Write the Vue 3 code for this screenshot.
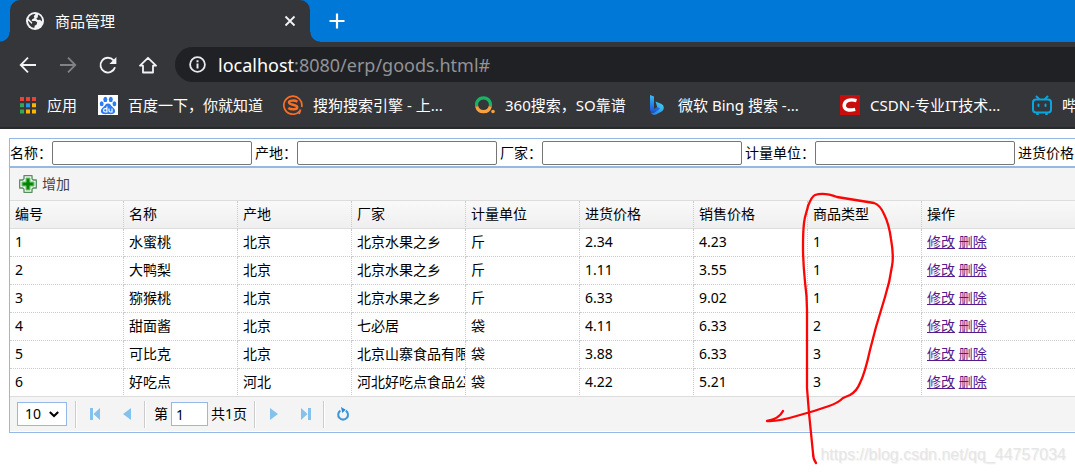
<script setup>
import { ref } from 'vue'

const searchFields = ref([
  { id: 'name', label: '名称：', value: '' },
  { id: 'origin', label: '产地：', value: '' },
  { id: 'maker', label: '厂家：', value: '' },
  { id: 'unit', label: '计量单位：', value: '' },
  { id: 'cost', label: '进货价格：', value: '' },
])

const columns = ['编号', '名称', '产地', '厂家', '计量单位', '进货价格', '销售价格', '商品类型', '操作']

const goods = [
  ['1', '水蜜桃', '北京', '北京水果之乡', '斤', '2.34', '4.23', '1'],
  ['2', '大鸭梨', '北京', '北京水果之乡', '斤', '1.11', '3.55', '1'],
  ['3', '猕猴桃', '北京', '北京水果之乡', '斤', '6.33', '9.02', '1'],
  ['4', '甜面酱', '北京', '七必居', '袋', '4.11', '6.33', '2'],
  ['5', '可比克', '北京', '北京山寨食品有限', '袋', '3.88', '6.33', '3'],
  ['6', '好吃点', '河北', '河北好吃点食品公', '袋', '4.22', '5.21', '3'],
]

const page = ref('1')
const pageSize = ref('10')
</script>

<template>
  <div class="page">
    <header class="browser">
      <div class="tabstrip">
        <div class="tab">
          <svg class="globe" width="18" height="18" viewBox="0 0 18 18">
            <circle cx="9" cy="9" r="9" fill="#f1f3f4" />
            <path d="M9.5 2 7.8 4.2 8.4 6 6.2 7.3 5.6 9H9.4l1.8 1.5-.5 2-2 1.2-.4 2.3A7.2 7.2 0 0 1 2 8.600L5.800 12l.5-1.600L2.400 6.600A7.200 7.200 0 0 1 9.500 2z" fill="#35363a" />
            <path d="M12 2.600a7.200 7.200 0 0 1 4 7l-2-1.800-2.400.2-1.400-1.800 1.600-.8z" fill="#35363a" />
          </svg>
          <span class="tab-title">商品管理</span>
          <button class="plain" aria-label="关闭标签页">
            <svg width="12" height="12" viewBox="0 0 12 12"><path d="M1.500 1.500l9 9M10.500 1.500l-9 9" stroke="#f1f3f4" stroke-width="1.800" /></svg>
          </button>
        </div>
        <button class="plain new-tab" aria-label="新标签页">
          <svg width="16" height="16" viewBox="0 0 16 16"><path d="M8 .5v15M.5 8h15" stroke="#fff" stroke-width="2.200" /></svg>
        </button>
      </div>

      <div class="navbar">
        <nav class="nav-buttons">
          <button class="plain" aria-label="后退">
            <svg width="20" height="20" viewBox="0 0 20 20" fill="none" stroke="#f1f3f4" stroke-width="1.800"><path d="M18 10H3M10 2.700 2.700 10l7.300 7.300" /></svg>
          </button>
          <button class="plain" aria-label="前进">
            <svg width="20" height="20" viewBox="0 0 20 20" fill="none" stroke="#818286" stroke-width="1.800"><path d="M2 10h15M10 2.700l7.300 7.300-7.300 7.300" /></svg>
          </button>
          <button class="plain" aria-label="重新加载">
            <svg width="20" height="20" viewBox="0 0 20 20"><path d="M15.600 5.400A7.400 7.400 0 1 0 17 12.300" fill="none" stroke="#f1f3f4" stroke-width="1.900" /><path d="M18.400 1.900v7H11.400z" fill="#f1f3f4" /></svg>
          </button>
          <button class="plain" aria-label="主页">
            <svg width="20" height="20" viewBox="0 0 20 20" fill="none" stroke="#f1f3f4" stroke-width="1.800"><path d="M2 10.700H5V17.500h10v-6.800h3L10 2.800z" stroke-linejoin="round" /></svg>
          </button>
        </nav>
        <div class="omnibox">
          <svg width="17" height="17" viewBox="0 0 17 17"><circle cx="8.500" cy="8.500" r="7.400" fill="none" stroke="#e8eaed" stroke-width="1.800" /><path d="M8.500 7.500v5M8.500 4.200v2" stroke="#e8eaed" stroke-width="2" /></svg>
          <span class="url"><b>localhost</b>:8080/erp/goods.html#</span>
        </div>
      </div>

      <div class="bookmarks">
        <a class="bookmark apps" href="#">
          <svg width="17" height="17" viewBox="0 0 17 17">
            <path d="M0 0h4v4H0zM6 0h4v4H6zM12 0h4v4h-4z" fill="#ea4335" />
            <path d="M0 6.300h4v4H0zM0 12.600h4v4H0z" fill="#34a853" />
            <path d="M6 6.300h4v4H6z" fill="#2196f3" />
            <path d="M12 6.300h4v4h-4zM6 12.600h4v4H6zM12 12.600h4v4h-4z" fill="#fbb506" />
          </svg>
          应用
        </a>
        <a class="bookmark baidu" href="#">
          <svg width="20" height="20" viewBox="0 0 20 20">
            <path d="M0 0h20v20H0z" fill="#fff" />
            <g fill="#2b7df5">
              <ellipse cx="7.300" cy="4.400" rx="2" ry="2.700" /><ellipse cx="12.800" cy="4.400" rx="2" ry="2.700" />
              <ellipse cx="3.700" cy="8.800" rx="1.900" ry="2.500" /><ellipse cx="16.400" cy="8.800" rx="1.900" ry="2.500" />
              <path d="M10 8.400c2.500 0 3 2.100 4.600 3.700 2 2 2.900 3 2.400 4.900-.7 2.600-4 2.100-7 2.100s-6.300.5-7-2.100c-.5-1.900.4-2.900 2.400-4.900C7 10.500 7.500 8.400 10 8.400z" />
            </g>
            <path d="M8.900 11.500v5.500H7.200a1.500 1.500 0 0 1 0-3.300h1.700M11 13.400v2.200q0 1.400 1.300 1.400H14v-3.600" fill="none" stroke="#fff" stroke-width="1.200" />
          </svg>
          百度一下，你就知道
        </a>
        <a class="bookmark sogou" href="#">
          <svg width="20" height="20" viewBox="0 0 20 20" fill="none" stroke="#fb6f22">
            <path d="M16.600 16.200A9 9 0 1 1 18.700 12M15 17.800l-1.500.7" stroke-width="1.700" />
            <path d="M14.400 6.800C12.300 5.300 6 4.900 6 7.600c0 2.800 8.200 1.600 8.200 4.600 0 2.700-6.200 2.600-8.900.7" stroke-width="2.500" />
            <path d="M17.500 14.500 16 19" stroke-width="2" />
          </svg>
          搜狗搜索引擎 - 上...
        </a>
        <a class="bookmark so" href="#">
          <svg width="20" height="20" viewBox="0 0 20 20" fill="none" stroke-width="3.200">
            <path d="M1.700 11.500A7 7 0 1 1 15.300 11.500" stroke="#19b365" />
            <path d="M1.700 11.300A7 7 0 0 0 15.300 11.300" stroke="#f9a03f" />
            <circle cx="18" cy="16.500" r="1.800" fill="#f9a03f" stroke="none" />
          </svg>
          360搜索，SO靠谱
        </a>
        <a class="bookmark bing" href="#">
          <svg width="20" height="20" viewBox="0 0 20 20">
            <defs>
              <linearGradient id="bing-stem" x1="0" y1="0" x2="0" y2="1"><stop offset="0" stop-color="#38bdf8" /><stop offset="1" stop-color="#1b4fd8" /></linearGradient>
              <linearGradient id="bing-bowl" x1="0" y1="1" x2="1" y2="0"><stop offset="0" stop-color="#1f74ea" /><stop offset="1" stop-color="#43d8ee" /></linearGradient>
            </defs>
            <path d="M2 0l4 1.500V14l4-2.500 2.500 1.800L7 17.500Q2 18.500 2 14z" fill="url(#bing-stem)" />
            <path d="M7.500 6.500l5.500 2.300q3 1.300 2.800 4.300-.2 2.200-2.200 3.400L8 19.600q-4 1.400-5.600-2.600 2 1.600 4.600.3L12 13.500l-2.900-1.700z" fill="url(#bing-bowl)" />
          </svg>
          微软 Bing 搜索 -...
        </a>
        <a class="bookmark csdn" href="#">
          <svg width="20" height="20" viewBox="0 0 20 20"><path d="M0 0h20v20H0z" fill="#c90d0d" /><path d="M16.500 5.700C10 3.800 4.800 5.300 4.200 10.200c-.4 4.600 4.700 5.600 11 4.100" fill="none" stroke="#fff" stroke-width="3.400" /></svg>
          CSDN-专业IT技术...
        </a>
        <a class="bookmark bili" href="#">
          <svg width="20" height="20" viewBox="0 0 20 20" fill="none" stroke="#08a6dd" stroke-width="2" stroke-linecap="round"><rect x="1" y="4.500" width="18" height="13" rx="3" /><path d="M4.500 1.500 7 4M15.500 1.500 13 4M6.500 9.500v1.500M13.500 9.500v1.500M5 19h1M14 19h1" /></svg>
          哔
        </a>
      </div>
    </header>

    <main class="content">
      <form class="search" @submit.prevent>
        <template v-for="f in searchFields" :key="f.id">
          <label :for="f.id">{{ f.label }}</label>
          <input :id="f.id" v-model="f.value" type="text" />
        </template>
      </form>

      <section class="grid">
        <div class="toolbar">
          <button class="plain add">
            <svg width="18" height="18" viewBox="0 0 18 18">
              <path d="M5 .7h8v3L14.300 5h3v8h-3L13 14.300v3H5v-3L3.700 13h-3V5h3L5 3.700z" fill="#f3faf3" stroke="#578d61" stroke-width="1.300" stroke-linejoin="round" />
              <path d="M7 3h4v4h4v4h-4v4H7v-4H3V7h4z" fill="#169b16" stroke="#6ebf6e" stroke-width="1" />
              <path d="M9 4.500v9M4.500 9h9" stroke="#078407" stroke-width="2" />
            </svg>
            增加
          </button>
        </div>

        <table>
          <thead>
            <tr><th v-for="c in columns" :key="c" scope="col">{{ c }}</th></tr>
          </thead>
          <tbody>
            <tr v-for="row in goods" :key="row[0]">
              <td v-for="(cell, i) in row" :key="i">{{ cell }}</td>
              <td><a href="#">修改</a> <a href="#">删除</a></td>
            </tr>
          </tbody>
        </table>

        <footer class="pager">
          <div class="size">
            <select v-model="pageSize" aria-label="每页条数">
              <option>10</option>
              <option>20</option>
              <option>50</option>
            </select>
            <svg class="chevron" width="10" height="7" viewBox="0 0 10 7"><path d="M.8 1 5 5 9.200 1" fill="none" stroke="#000" stroke-width="2" /></svg>
          </div>
          <span class="sep"></span>
          <button class="plain" aria-label="首页"><svg width="10" height="12" viewBox="0 0 10 12" fill="#84c1ec"><path d="M0 0h3v12H0zM10 0v12L3.500 6z" /></svg></button>
          <button class="plain" aria-label="上一页"><svg width="8" height="12" viewBox="0 0 8 12" fill="#84c1ec"><path d="M8 0v12L0 6z" /></svg></button>
          <span class="sep"></span>
          <label class="page-no">第<input v-model="page" type="text" />共1页</label>
          <span class="sep"></span>
          <button class="plain" aria-label="下一页"><svg width="8" height="12" viewBox="0 0 8 12" fill="#84c1ec"><path d="M0 0v12l8-6z" /></svg></button>
          <button class="plain" aria-label="末页"><svg width="10" height="12" viewBox="0 0 10 12" fill="#84c1ec"><path d="M7 0h3v12H7zM0 0v12l6.500-6z" /></svg></button>
          <span class="sep"></span>
          <button class="plain" aria-label="刷新">
            <svg width="14" height="14" viewBox="0 0 14 14"><path d="M9.800 3.600A4.900 4.900 0 1 1 4.400 3.600" fill="none" stroke="#3f98dc" stroke-width="2.100" /><path d="M5 0l4.700 2.800L6.300 6z" fill="#2e86cf" /></svg>
          </button>
        </footer>
      </section>
    </main>

    <svg class="scribble" width="1075" height="473" viewBox="0 0 1075 473" fill="none" stroke="#fb0505" stroke-width="2.300" stroke-linecap="round" stroke-linejoin="round">
      <path d="M816 463Q813 459 813 453L809 413 807 388V310Q807 296 805 282 803 262 803 247 803 232 804 223C805 214 807 212 808 206Q812 196 815 195 824 192 837 197L874 203Q880 205 884 214 889 224 891 239 894 256 892 266 890 281 885 297L876 327 870 350Q865 373 860 383 857 391 850 395L843 398Q838 403 829 406 815 411 800 415 777 422 767 421 779 419 783 411" />
    </svg>
    <div class="watermark">https://blog.csdn.net/qq_44757034</div>
  </div>
</template>

<style>
body {
  background: #fff;
}
</style>

<style scoped>
.page {
  position: relative;
  overflow: hidden;
  min-height: 100vh;
  font: 14px/20px "Noto Sans", "Noto Sans CJK SC", sans-serif;
  color: #000;
}
.page * {
  box-sizing: border-box;
}
svg {
  display: block;
  flex: none;
}
input,
select,
button {
  font: inherit;
  color: inherit;
}
.plain {
  display: flex;
  align-items: center;
  justify-content: center;
  padding: 0;
  border: 0;
  background: none;
}

.browser {
  background: #35363a;
  border-bottom: 2px solid #28292c;
  color: #fff;
  font-size: 15px;
}
.tabstrip {
  display: flex;
  height: 42px;
  padding-left: 10px;
  background: #0078d7;
}
.tab {
  position: relative;
  display: flex;
  align-items: center;
  width: 300px;
  padding: 0 14px 0 16px;
  border-radius: 10px 10px 0 0;
  background: #35363a;
}
.tab::before,
.tab::after {
  content: "";
  position: absolute;
  bottom: 0;
  width: 10px;
  height: 10px;
}
.tab::before {
  right: 100%;
  background: radial-gradient(circle at 0 0, #0078d7 9px, #35363a 10px);
}
.tab::after {
  left: 100%;
  background: radial-gradient(circle at 100% 0, #0078d7 9px, #35363a 10px);
}
.tab-title {
  flex: 1;
  margin-left: 11px;
}
.new-tab {
  margin-left: 19px;
}
.navbar {
  display: flex;
  align-items: center;
  gap: 17px;
  height: 45px;
  padding-left: 18px;
}
.nav-buttons {
  display: flex;
  gap: 20px;
}
.omnibox {
  flex: 1;
  display: flex;
  align-items: center;
  gap: 12px;
  height: 35px;
  margin-right: -24px;
  padding-left: 14px;
  border-radius: 18px;
  background: #202124;
}
.url {
  font-size: 18px;
  line-height: 24px;
  color: #919396;
}
.url b {
  font-weight: 400;
  color: #fff;
}
.bookmarks {
  display: flex;
  height: 40px;
  padding: 0 0 4px 20px;
}
.bookmark {
  flex: none;
  display: flex;
  align-items: center;
  gap: 10px;
  width: 192px;
  color: #fff;
  white-space: nowrap;
  text-decoration: none;
}
.apps {
  width: 78px;
}
.baidu {
  width: 185px;
}
.so {
  width: 173px;
}

.content {
  padding: 9px 0 0 9px;
}
.search {
  display: flex;
  align-items: center;
  gap: 3px;
  height: 29px;
  border: 1px solid #95b8e7;
  border-right: 0;
  white-space: nowrap;
  overflow: hidden;
}
.search label {
  flex: none;
  margin-right: -3px;
}
.search input {
  flex: none;
  width: 200px;
  height: 24px;
  padding: 1px 2px;
  border: 1px solid #767676;
  border-radius: 2px;
  background: #fff;
}
.grid {
  border: 1px solid #95b8e7;
  border-right: 0;
}
.toolbar {
  display: flex;
  height: 33px;
  padding-left: 9px;
  border-bottom: 1px solid #ddd;
  background: #f4f4f4;
}
.add {
  gap: 5px;
  color: #444;
}
table {
  width: 100%;
  table-layout: fixed;
  border-collapse: separate;
  border-spacing: 0;
}
th,
td {
  width: 114px;
  height: 28px;
  padding: 0 0 2px 5px;
  border-right: 1px dotted #ccc;
  border-bottom: 1px dotted #ccc;
  font-weight: 400;
  text-align: left;
  white-space: nowrap;
  overflow: hidden;
}
th {
  border-bottom: 1px solid #ddd;
  background: linear-gradient(#f9f9f9, #efefef);
}
th:last-child,
td:last-child {
  width: auto;
  border-right: 0;
}
tbody tr:last-child td {
  border-bottom: 1px solid #ddd;
}
td a {
  color: #551a8b;
}

.pager {
  display: flex;
  align-items: center;
  height: 35px;
  padding-left: 7px;
  border-bottom: 1px solid #fff;
  background: #f4f4f4;
}
.size {
  position: relative;
  margin-right: 7px;
}
.size select {
  display: block;
  appearance: none;
  width: 50px;
  height: 24px;
  padding: 0 7px;
  border: 1px solid #95b8e7;
  border-radius: 0;
  background: #fff;
}
.chevron {
  position: absolute;
  top: 9px;
  right: 8px;
  pointer-events: none;
}
.sep {
  width: 2px;
  height: 27px;
  margin: 0 2px 0 1px;
  border-left: 1px solid #ccc;
  border-right: 1px solid #fff;
}
.pager .plain {
  width: 32px;
  height: 28px;
}
.page-no {
  display: flex;
  align-items: center;
  gap: 3px;
  margin: 0 6px;
}
.page-no input {
  width: 37px;
  height: 24px;
  padding: 0 4px;
  border: 1px solid #95b8e7;
  background: #fff;
}

.scribble {
  position: absolute;
  top: 0;
  left: 0;
  pointer-events: none;
}
.watermark {
  position: absolute;
  right: 9px;
  bottom: 8px;
  font: 16px/20px "Liberation Sans", Arial, sans-serif;
  color: #e6e6e6;
  text-shadow: 1px 1px 1px #f0f0f0;
}
</style>
